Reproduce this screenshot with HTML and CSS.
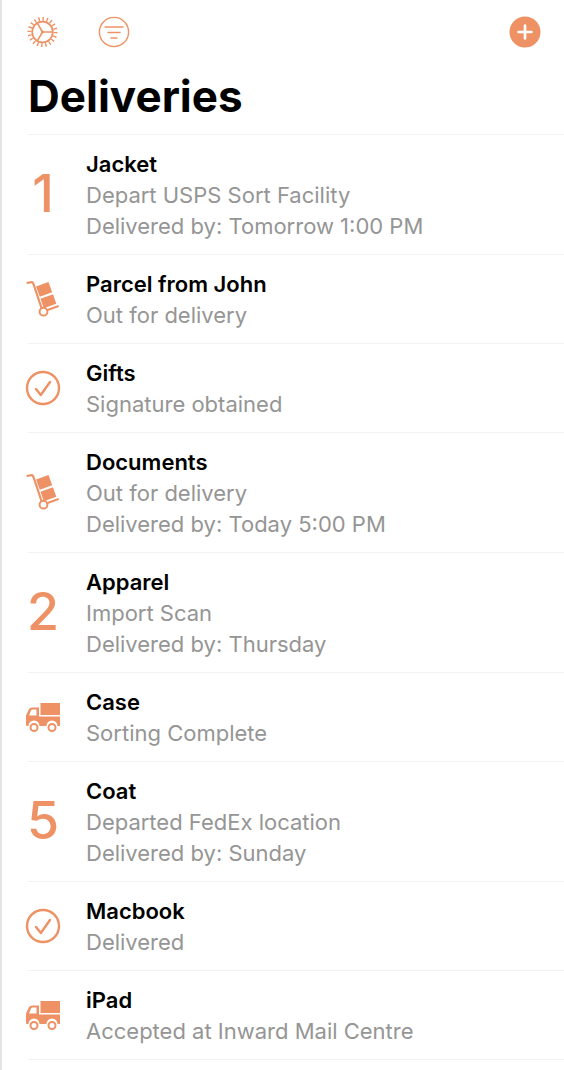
FILE: index.html
```html
<!DOCTYPE html>
<html lang="en">
<head>
<meta charset="utf-8">
<meta name="viewport" content="width=device-width, initial-scale=1">
<title>Deliveries</title>
<link rel="stylesheet" href="styles.css">
</head>
<body>
<svg class="sprite" aria-hidden="true">
  <symbol id="dolly" viewBox="0 0 36 40">
    <path d="M2.500 3.800 7 3 8.500 5 16.500 29" fill="none" stroke="currentColor" stroke-width="2.200" stroke-linecap="round" stroke-linejoin="round"/>
    <path d="M11 7.500 23.500 3 27.200 13.300 14.800 17.800ZM15.500 19.700 28 15.200 31.300 24.800 18.800 29.200Z" fill="currentColor"/>
    <path d="M22.500 31 33 27.200" stroke="currentColor" stroke-width="2" stroke-linecap="round"/>
    <circle cx="18.500" cy="32.700" r="3.900" fill="none" stroke="currentColor" stroke-width="2"/>
  </symbol>
  <symbol id="check" viewBox="0 0 36 36">
    <circle cx="18" cy="18" r="16" fill="none" stroke="currentColor" stroke-width="2.400"/>
    <path d="M11 19 15.800 25 25 12" fill="none" stroke="currentColor" stroke-width="2.400" stroke-linecap="round" stroke-linejoin="round"/>
  </symbol>
  <symbol id="truck" viewBox="0 0 36 30">
    <path fill="currentColor" fill-rule="evenodd" d="M15.500 1H35V13H15.500ZM1 13.500 4 7Q5 5.500 7 5.500H14V14.500H35V24H32.500A5.500 5.500 0 0 0 21.500 24H14.500A5.500 5.500 0 0 0 3.500 24H2Q1 24 1 23ZM4 13.500H11.500V7.500H7.500Q6.500 7.500 6 8.500Z"/>
    <g fill="none" stroke="currentColor" stroke-width="2"><circle cx="9" cy="25.500" r="3.500"/><circle cx="27" cy="25.500" r="3.500"/></g>
  </symbol>
</svg>
<div class="app">
  <header class="header">
    <div class="toolbar">
      <button class="tool" type="button" aria-label="Settings">
        <svg class="tool-icon" viewBox="0 0 32 32" fill="none" stroke="currentColor" aria-hidden="true">
          <circle cx="16.500" cy="16" r="10.300" stroke-width="1.700"/>
          <circle cx="16.500" cy="16" r="13" stroke-width="4" pathLength="100" stroke-dasharray="1.700 3.300"/>
          <path d="M16.500 16H27M16.500 16 11.200 6.900M16.500 16 11.200 25.100" stroke-width="1.600"/>
          <circle cx="16.500" cy="16" r="1" fill="currentColor"/>
        </svg>
      </button>
      <button class="tool" type="button" aria-label="Filter">
        <svg class="tool-icon" viewBox="0 0 32 32" fill="none" stroke="currentColor" stroke-width="1.400" stroke-linecap="round" aria-hidden="true">
          <circle cx="16" cy="16" r="14.600"/>
          <path d="M7 11H25M10 16.500H22M13 22H19"/>
        </svg>
      </button>
      <button class="tool tool-add" type="button" aria-label="Add delivery">
        <svg class="tool-icon" viewBox="0 0 32 32" aria-hidden="true">
          <circle cx="16" cy="16" r="15.500" fill="currentColor"/>
          <path d="M9.500 16H22.500M16 9.500V22.500" stroke="#fff" stroke-width="2.600" stroke-linecap="round"/>
        </svg>
      </button>
    </div>
    <h1 class="title">Deliveries</h1>
  </header>
  <ul class="list">
    <li class="row"><span class="mark">1</span><div class="info"><h2 class="name">Jacket</h2><p class="detail">Depart USPS Sort Facility</p><p class="detail">Delivered by: Tomorrow 1:00 PM</p></div></li>
    <li class="row"><span class="mark"><svg class="dolly" aria-hidden="true"><use href="#dolly"/></svg></span><div class="info"><h2 class="name">Parcel from John</h2><p class="detail">Out for delivery</p></div></li>
    <li class="row"><span class="mark"><svg class="check" aria-hidden="true"><use href="#check"/></svg></span><div class="info"><h2 class="name">Gifts</h2><p class="detail">Signature obtained</p></div></li>
    <li class="row"><span class="mark"><svg class="dolly" aria-hidden="true"><use href="#dolly"/></svg></span><div class="info"><h2 class="name">Documents</h2><p class="detail">Out for delivery</p><p class="detail">Delivered by: Today 5:00 PM</p></div></li>
    <li class="row"><span class="mark">2</span><div class="info"><h2 class="name">Apparel</h2><p class="detail">Import Scan</p><p class="detail">Delivered by: Thursday</p></div></li>
    <li class="row"><span class="mark"><svg class="truck" aria-hidden="true"><use href="#truck"/></svg></span><div class="info"><h2 class="name">Case</h2><p class="detail">Sorting Complete</p></div></li>
    <li class="row"><span class="mark">5</span><div class="info"><h2 class="name">Coat</h2><p class="detail">Departed FedEx location</p><p class="detail">Delivered by: Sunday</p></div></li>
    <li class="row"><span class="mark"><svg class="check" aria-hidden="true"><use href="#check"/></svg></span><div class="info"><h2 class="name">Macbook</h2><p class="detail">Delivered</p></div></li>
    <li class="row"><span class="mark"><svg class="truck" aria-hidden="true"><use href="#truck"/></svg></span><div class="info"><h2 class="name">iPad</h2><p class="detail">Accepted at Inward Mail Centre</p></div></li>
  </ul>
</div>
</body>
</html>
```
FILE: styles.css
```css
* { box-sizing: border-box; }

body {
  margin: 0;
  background: #fff;
  color: #000;
  font-family: Inter, "Liberation Sans", sans-serif;
}

.sprite { position: absolute; width: 0; height: 0; }

.app {
  min-height: 100vh;
  border-left: 2px solid #e3e3e3;
}

.header { padding: 16px 24px 8px; }

.toolbar { display: flex; gap: 40px; }

.tool {
  padding: 0;
  border: 0;
  background: none;
  color: #ee9265;
  cursor: pointer;
}

.tool-add { margin-left: auto; margin-right: -1px; }

.tool-icon { display: block; width: 32px; height: 32px; }

.title {
  margin: 18px 0 0 2px;
  font-size: 44px;
  font-weight: 700;
  line-height: 60px;
}

.list {
  margin: 0 0 0 26px;
  padding: 0;
  list-style: none;
  border-top: 1px solid #f2f2f2;
}

.row {
  display: flex;
  align-items: center;
  gap: 24px;
  padding: 14px 8px 12px 0;
  border-bottom: 1px solid #f2f2f2;
}

.mark {
  display: flex;
  flex: none;
  justify-content: center;
  width: 36px;
  margin-left: -3px;
  padding-bottom: 3px;
  color: #ee9265;
  font-size: 52px;
  font-weight: 500;
  line-height: 60px;
}

.dolly { width: 36px; height: 40px; }
.check { width: 36px; height: 36px; }
.truck { width: 36px; height: 30px; }

.info { flex: 1; min-width: 0; padding-left: 1px; }

.name, .detail { margin: 0; font-size: 22px; line-height: 31px; }
.name { font-weight: 600; }
.detail { color: #959595; font-weight: 400; }
```
